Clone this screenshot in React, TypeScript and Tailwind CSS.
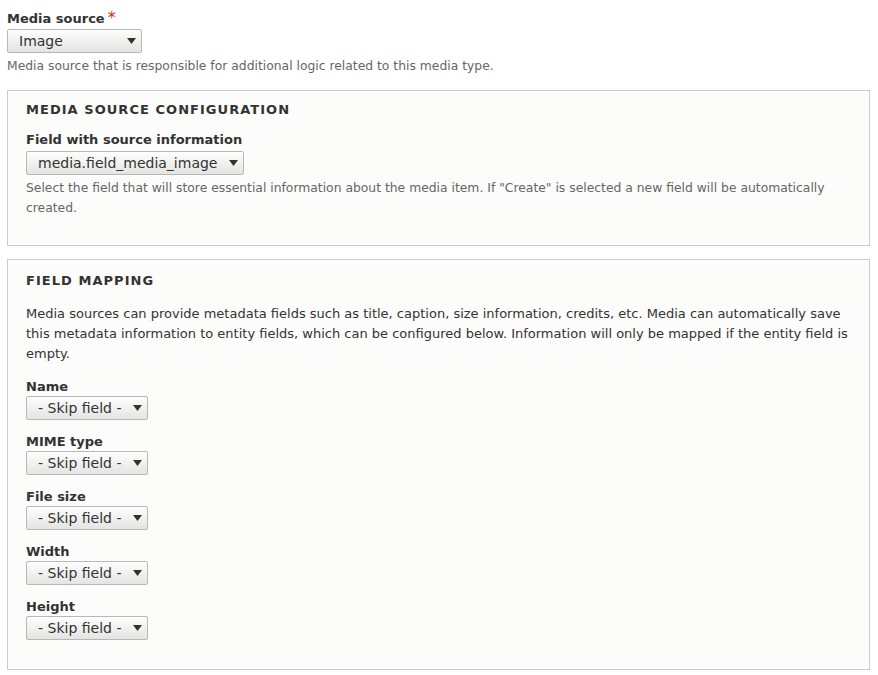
import React from "react";

function Arrow() {
  return (
    <svg width="9" height="6" viewBox="0 0 9 6" className="shrink-0">
      <polygon points="0,0 9,0 4.5,6" fill="#333" />
    </svg>
  );
}

function Select({ value, width }: { value: string; width: number }) {
  return (
    <div
      className="flex h-[24px] items-center justify-between rounded-[2px] border border-[#b8b8b8] bg-gradient-to-b from-[#fefefe] to-[#e4e4e1] pl-[11px] pr-[5px] text-[14px] leading-[20px] text-[#333]"
      style={{ width }}
    >
      <span>{value}</span>
      <Arrow />
    </div>
  );
}

function Label({ children, required }: { children: React.ReactNode; required?: boolean }) {
  return (
    <div className="h-[18px] text-[13px] font-bold leading-[18px] text-[#333]">
      {children}
      {required && (
        <span className="ml-[3px] inline-block align-top text-[16px] font-normal leading-[16px] text-[#e32700]">
          *
        </span>
      )}
    </div>
  );
}

const mappings = ["Name", "MIME type", "File size", "Width", "Height"];

export default function App() {
  return (
    <div
      className="min-h-[675px] bg-white pl-[7px] pr-[8px] pt-[10px] text-[#333]"
      style={{ fontFamily: '"DejaVu Sans", "Liberation Sans", sans-serif' }}
    >
      <Label required>Media source</Label>
      <div className="mt-[1px]">
        <Select value="Image" width={135} />
      </div>
      <div className="mt-[3px] text-[12.35px] leading-[20px] text-[#666]">
        Media source that is responsible for additional logic related to this media type.
      </div>

      <div className="mt-[14px] border border-[#ccc] bg-[#fcfcfa] px-[18px] pb-[27px] pt-[10px]">
        <div className="text-[13px] font-bold uppercase leading-[18px] tracking-[0.08em] text-[#333]">
          Media source configuration
        </div>
        <div className="mt-[12px]">
          <Label>Field with source information</Label>
          <div className="mt-[2px]">
            <Select value="media.field_media_image" width={218} />
          </div>
          <div className="mt-[3px] text-[12.35px] leading-[20px] text-[#666]">
            Select the field that will store essential information about the media item. If "Create" is selected a new field will be automatically created.
          </div>
        </div>
      </div>

      <div className="mt-[13px] border border-[#ccc] bg-[#fcfcfa] px-[18px] pb-[29px] pt-[12px]">
        <div className="text-[13px] font-bold uppercase leading-[18px] tracking-[0.08em] text-[#333]">
          Field mapping
        </div>
        <p className="mt-[14px] text-[13px] leading-[20px] text-[#333]">
          Media sources can provide metadata fields such as title, caption, size information, credits, etc. Media can automatically save this metadata information to entity fields, which can be configured below. Information will only be mapped if the entity field is empty.
        </p>
        <div className="mt-[14px] flex flex-col gap-[13px]">
          {mappings.map((m) => (
            <div key={m}>
              <Label>{m}</Label>
              <Select value="- Skip field -" width={122} />
            </div>
          ))}
        </div>
      </div>
    </div>
  );
}
